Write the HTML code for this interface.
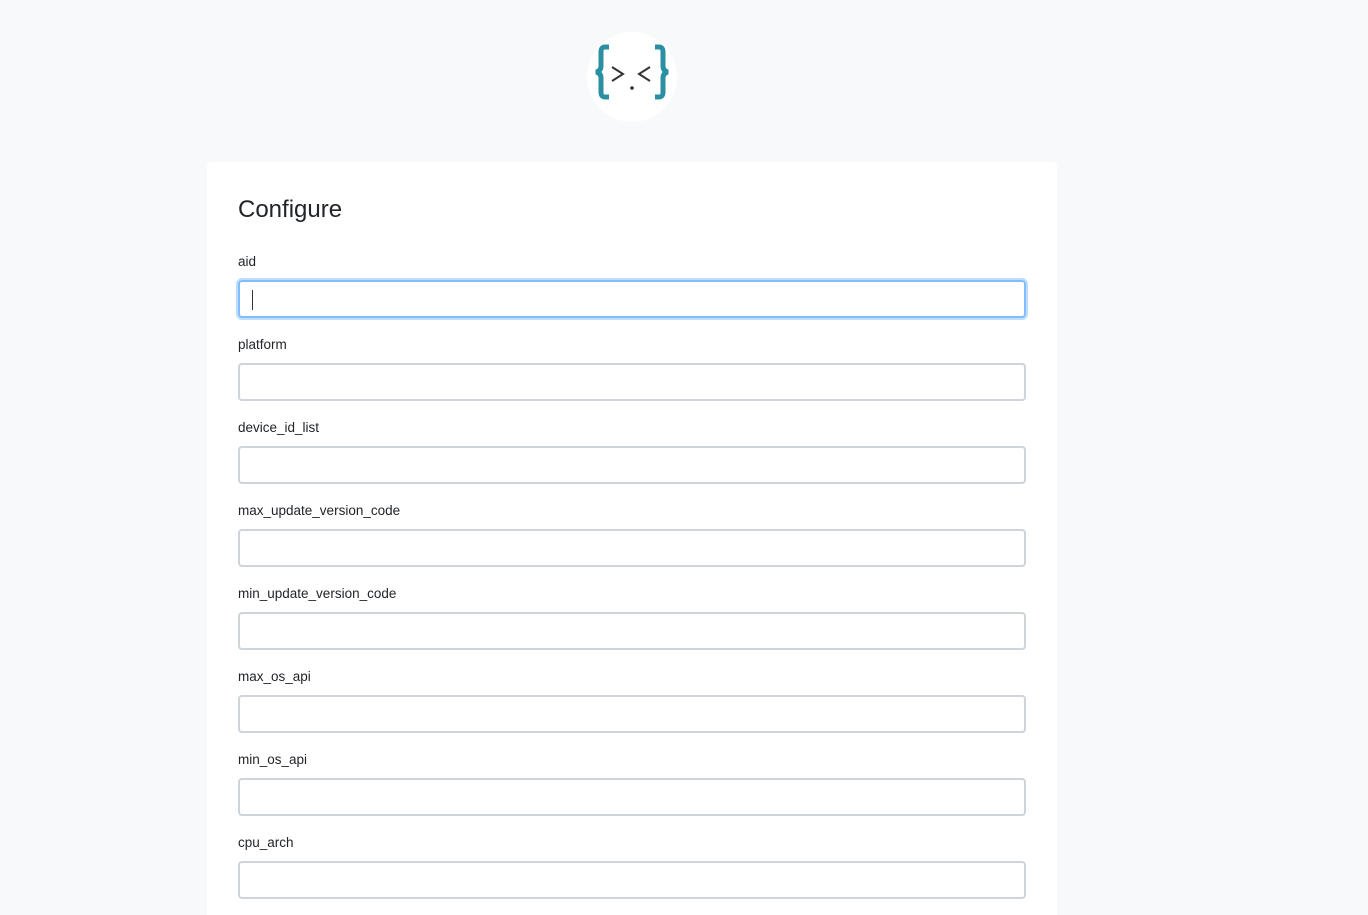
<!DOCTYPE html>
<html style="height:915px;overflow:hidden"><head><meta charset="utf-8"><style>
body{margin:0;background:#f8f9fa;font-family:"Liberation Sans",sans-serif;color:#212529;width:1368px;height:915px;overflow:hidden;position:relative}
.logo{position:absolute;left:587px;top:32px;width:90px;height:90px;border-radius:50%;background:#fff}
.card{position:absolute;left:207px;top:162px;width:850px;height:753px;background:#fff;border-radius:4px 4px 0 0}
h1{position:absolute;left:31px;top:33px;margin:0;font-size:24px;font-weight:500;line-height:30px}
.f{position:absolute;left:31px;width:788px}
.f label{display:block;font-size:13.5px;line-height:16px;height:26px}
.f .in{height:34px;border:2px solid #ced4da;border-radius:4px;box-sizing:content-box;width:784px}
.f .in.fo{border-color:#80bdff;box-shadow:0 0 0 2px rgba(0,123,255,.25)}
.caret{position:absolute;left:14px;top:36px;width:1px;height:20px;background:#333}
</style></head><body>
<div class="logo"><svg width="90" height="90" viewBox="0 0 90 90">
<path d="M22 15 h-4 q-4 0 -4 5 v14 q0 5 -5 6 q5 1 5 6 v14 q0 5 4 5 h4" fill="none" stroke="#2b8fa3" stroke-width="5"/>
<path d="M68 15 h4 q4 0 4 5 v14 q0 5 5 6 q-5 1 -5 6 v14 q0 5 -4 5 h-4" fill="none" stroke="#2b8fa3" stroke-width="5"/>
<path d="M25 35 l11 7 l-11 7" fill="none" stroke="#333" stroke-width="2"/>
<path d="M63 35 l-11 7 l11 7" fill="none" stroke="#333" stroke-width="2"/>
<circle cx="45" cy="56" r="1.8" fill="#333"/>
</svg></div>
<div class="card">
<h1>Configure</h1>
<div class="f" style="top:92px"><label>aid</label><div class="in fo"></div><div class="caret"></div></div>
<div class="f" style="top:175px"><label>platform</label><div class="in"></div></div>
<div class="f" style="top:258px"><label>device_id_list</label><div class="in"></div></div>
<div class="f" style="top:341px"><label>max_update_version_code</label><div class="in"></div></div>
<div class="f" style="top:424px"><label>min_update_version_code</label><div class="in"></div></div>
<div class="f" style="top:507px"><label>max_os_api</label><div class="in"></div></div>
<div class="f" style="top:590px"><label>min_os_api</label><div class="in"></div></div>
<div class="f" style="top:673px"><label>cpu_arch</label><div class="in"></div></div>
</div>
</body></html>
